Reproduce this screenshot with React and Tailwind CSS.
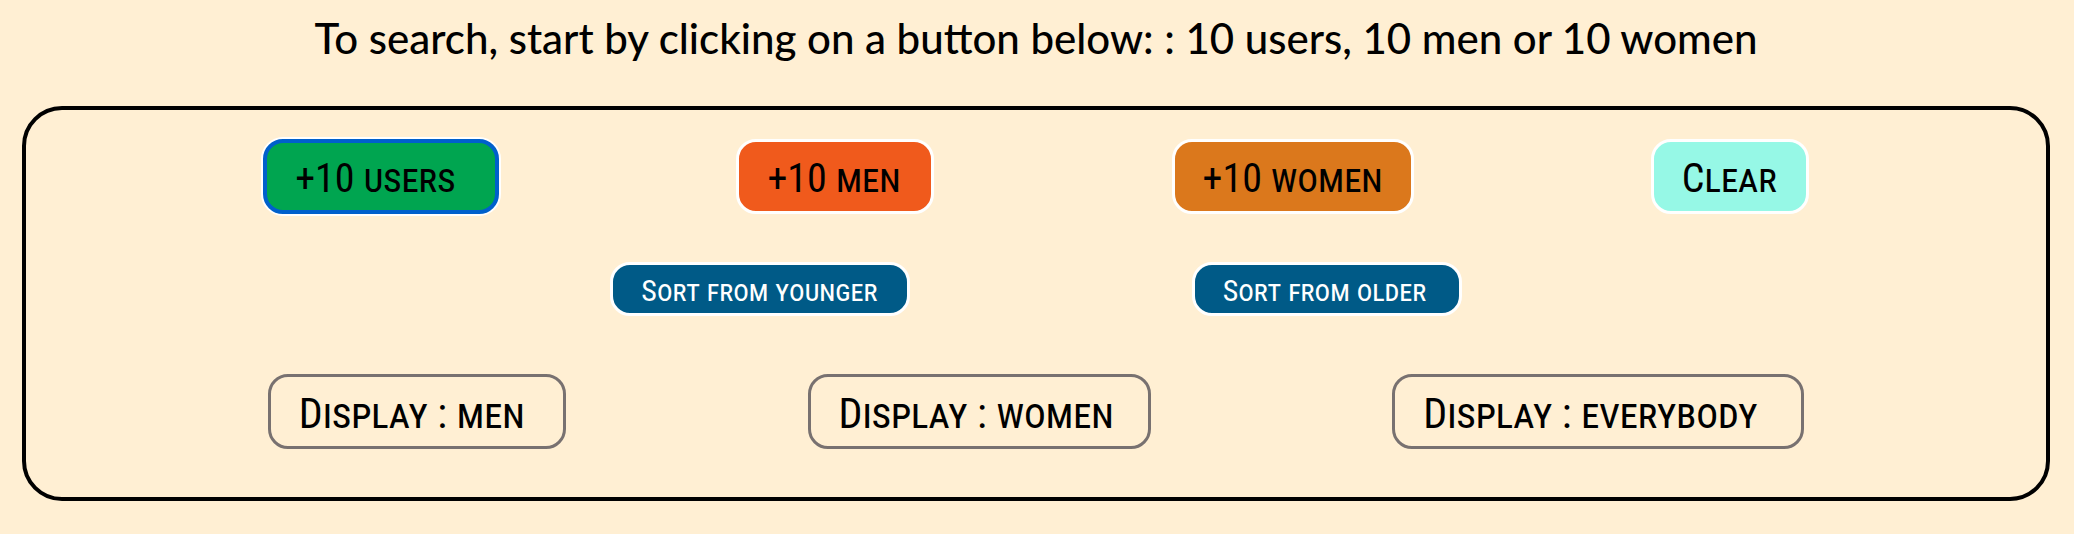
const addButtons = [
  { label: "+10 users", style: "min-w-[236px] border-4 border-[#0060cc] bg-[#00a550] ring-2 ring-white" },
  { label: "+10 men", style: "min-w-[198px] border-3 border-white bg-[#f05a1c]" },
  { label: "+10 women", style: "min-w-[242px] border-3 border-white bg-[#db781c]" },
  { label: "Clear", style: "min-w-[158px] border-3 border-white bg-[#96f8e6]" },
];

const sortButtons = [
  { label: "Sort from younger", style: "min-w-[300px]" },
  { label: "Sort from older", style: "min-w-[270px]" },
];

const displayButtons = [
  { label: "Display : men", style: "min-w-[298px]" },
  { label: "Display : women", style: "min-w-[343px]" },
  { label: "Display : everybody", style: "min-w-[412px]" },
];

const base = "rounded-[20px] pl-7 pr-2 text-left leading-none";
const large = "h-[75px] pt-1 text-black";

export default function App() {
  return (
    <main className="min-h-screen bg-[#ffefd3] pr-6 pb-8 pl-[22px] text-black">
      <h1 className="pt-2.5 pb-3.5 text-center font-[family-name:Lato,sans-serif] text-[42px] leading-[56px] font-medium">
        To search, start by clicking on a button below: : 10 users, 10 men or 10 women
      </h1>
      <section className="mt-[26px] rounded-[40px] border-4 border-black pt-[29px] pb-12 font-[family-name:'Roboto_Condensed','Roboto',sans-serif] [font-variant-caps:small-caps]">
        <div className="flex flex-wrap justify-evenly gap-y-4">
          {addButtons.map(({ label, style }) => (
            <button key={label} type="button" className={`${base} ${large} text-[40px] ${style}`}>
              {label}
            </button>
          ))}
        </div>
        <div className="mt-12 flex flex-wrap justify-evenly gap-y-4 px-[15%]">
          {sortButtons.map(({ label, style }) => (
            <button
              key={label}
              type="button"
              className={`${base} h-[54px] border-3 border-white bg-[#005a87] pt-1 text-[30px] text-white ${style}`}
            >
              {label}
            </button>
          ))}
        </div>
        <div className="mt-[58px] flex flex-wrap justify-evenly gap-y-4">
          {displayButtons.map(({ label, style }) => (
            <button key={label} type="button" className={`${base} ${large} border-3 border-[#787170] text-[42px] ${style}`}>
              {label}
            </button>
          ))}
        </div>
      </section>
    </main>
  );
}
